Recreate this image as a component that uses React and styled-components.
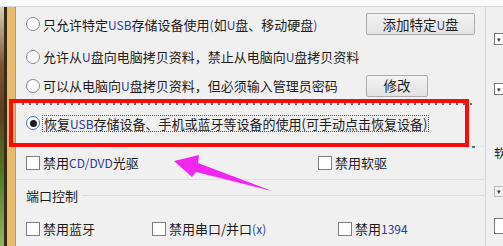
import styled, { createGlobalStyle } from "styled-components";

const GlobalStyle = createGlobalStyle`
  html, body {
    margin: 0;
    padding: 0;
  }
  body {
    width: 503px;
    height: 246px;
    overflow: hidden;
    background: #f0f0f0;
    font-family: "Noto Sans CJK SC", "Microsoft YaHei", sans-serif;
    color: #1c1c1c;
  }
`;

const Screen = styled.div`
  position: relative;
  width: 503px;
  height: 246px;
  overflow: hidden;
  display: flex;
  flex-direction: column;
`;

const TopBar = styled.div`
  height: 6px;
  background: #fbfbfb;
  border-bottom: 1px solid #dadada;
`;

const Body = styled.div`
  flex: 1;
  display: flex;
  min-height: 0;
`;

const Desktop = styled.div`
  width: 4px;
  background: linear-gradient(180deg, #d8cdbb 0%, #7a5230 25%, #5b4020 45%, #4f7a2c 70%, #8fb56a 100%);
`;

const FrameEdge = styled.div`
  width: 3px;
  background: #3b2a16;
`;

const FrameTan = styled.div`
  width: 8px;
  background: #e6bb69;
  border-right: 1px solid #a89b86;
`;

const Panel = styled.div`
  flex: 1;
  display: flex;
  flex-direction: column;
  background: #f0f0f0;
`;

const OptionRow = styled.div`
  height: ${(p) => p.$h}px;
  display: grid;
  grid-template-columns: 340px auto;
  align-items: center;
  padding-left: 10px;
`;

const Choice = styled.label`
  display: flex;
  align-items: center;
  gap: 3px;
  font-size: 13px;
  line-height: 1;
  white-space: nowrap;
`;

const Radio = styled.span`
  width: 14px;
  height: 14px;
  box-sizing: border-box;
  border-radius: 50%;
  border: 1px solid ${(p) => (p.$on ? "#3d7cb4" : "#8a8a8a")};
  background: radial-gradient(circle, #ffffff 55%, #ececec 100%);
  display: flex;
  align-items: center;
  justify-content: center;
  flex-shrink: 0;
  &::after {
    content: "";
    width: 7px;
    height: 7px;
    border-radius: 50%;
    background: ${(p) => (p.$on ? "#1a1a1a" : "transparent")};
  }
`;

const Box = styled.span`
  width: 14px;
  height: 14px;
  box-sizing: border-box;
  border: 1px solid #7f7f7f;
  background: #ffffff;
  flex-shrink: 0;
`;

const Latin = styled.span`
  color: #2a3a98;
  font-size: 12px;
`;

const FocusText = styled.span`
  padding: 1px 1px;
  outline: 1px dotted #555;
  outline-offset: 0;
`;

const Button = styled.button`
  width: ${(p) => p.$w}px;
  height: 22px;
  padding: 0;
  border: 1px solid #acacac;
  border-radius: 2px;
  background: linear-gradient(180deg, #f3f3f3 0%, #e3e3e3 100%);
  font-family: inherit;
  font-size: 13.5px;
  line-height: 1;
  color: #1c1c1c;
`;

const FocusGroup = styled.div`
  height: 47px;
  display: flex;
  flex-direction: column;
  padding-top: 3px;
  box-sizing: border-box;
`;

const Dots = styled.div`
  height: 2px;
  margin-left: 6px;
  width: 453px;
  background-image: repeating-linear-gradient(90deg, #6a6a6a 0 2px, transparent 2px 7px);
`;

const Rule = styled.div`
  height: 1px;
  background: ${(p) => p.$c || "#dedede"};
`;

const CheckRow = styled.div`
  height: ${(p) => p.$h}px;
  display: grid;
  grid-template-columns: ${(p) => p.$cols};
  align-items: center;
  padding-left: 10px;
`;

const GroupTitle = styled.div`
  height: 32px;
  display: flex;
  align-items: center;
  gap: 4px;
  padding-left: 10px;
  font-size: 13px;
  line-height: 1;
  &::after {
    content: "";
    flex: 1;
    height: 1px;
    background: #dcdcdc;
  }
`;

const SidePanel = styled.div`
  width: 18px;
  border-left: 1px solid #d6d6d6;
  padding-left: 8px;
  box-sizing: border-box;
  overflow: hidden;
  display: flex;
  flex-direction: column;
  font-size: 12px;
  line-height: 1;
`;

const SideBox = styled.div`
  flex-shrink: 0;
  margin-top: ${(p) => p.$top}px;
  width: 16px;
  height: ${(p) => p.$h}px;
  box-sizing: border-box;
  border: 1px solid ${(p) => (p.$dim ? "#b8b8b8" : "#7a7a7a")};
  background: ${(p) => (p.$dim ? "#f2f2f2" : "#ffffff")};
  display: flex;
  align-items: center;
  padding-left: 2px;
  font-size: 7px;
  color: #333;
`;

const SideText = styled.div`
  margin-top: ${(p) => p.$top}px;
  width: 10px;
  overflow: hidden;
  white-space: nowrap;
  height: 12px;
`;

const RedMark = styled.div`
  position: absolute;
  left: 9px;
  top: 99px;
  width: 460px;
  height: 48px;
  box-sizing: border-box;
  border: 4px solid #ff0a0a;
  pointer-events: none;
`;

const Dash = styled.div`
  position: absolute;
  left: 472px;
  top: 146px;
  width: 3px;
  height: 2px;
  background: #6a6a6a;
`;

const ArrowLayer = styled.svg`
  position: absolute;
  left: 0;
  top: 0;
  pointer-events: none;
`;

export default function App() {
  return (
    <Screen>
      <GlobalStyle />
      <TopBar />
      <Body>
        <Desktop />
        <FrameEdge />
        <FrameTan />
        <Panel>
          <OptionRow $h={36}>
            <Choice>
              <Radio />
              <span>
                只允许特定<Latin>USB</Latin>存储设备使用<Latin>(</Latin>如<Latin>U</Latin>盘、移动硬盘<Latin>)</Latin>
              </span>
            </Choice>
            <Button $w={109}>
              添加特定<Latin>U</Latin>盘
            </Button>
          </OptionRow>
          <OptionRow $h={30}>
            <Choice>
              <Radio />
              <span>
                允许从<Latin>U</Latin>盘向电脑拷贝资料，禁止从电脑向<Latin>U</Latin>盘拷贝资料
              </span>
            </Choice>
          </OptionRow>
          <OptionRow $h={30}>
            <Choice>
              <Radio />
              <span>
                可以从电脑向<Latin>U</Latin>盘拷贝资料，但必须输入管理员密码
              </span>
            </Choice>
            <Button $w={62}>修改</Button>
          </OptionRow>
          <FocusGroup>
            <Dots />
            <OptionRow $h={36}>
              <Choice>
                <Radio $on />
                <FocusText>
                  恢复<Latin>USB</Latin>存储设备、手机或蓝牙等设备的使用(可手动点击恢复设备)
                </FocusText>
              </Choice>
            </OptionRow>
          </FocusGroup>
          <Rule $c="#e6e6e6" />
          <CheckRow $h={33} $cols="292px auto">
            <Choice>
              <Box />
              <span>
                禁用<Latin>CD/DVD</Latin>光驱
              </span>
            </Choice>
            <Choice>
              <Box />
              <span>禁用软驱</span>
            </Choice>
          </CheckRow>
          <Rule />
          <GroupTitle>端口控制</GroupTitle>
          <CheckRow $h={36} $cols="126px 186px auto">
            <Choice>
              <Box />
              <span>禁用蓝牙</span>
            </Choice>
            <Choice>
              <Box />
              <span>
                禁用串口/并口<Latin>(x)</Latin>
              </span>
            </Choice>
            <Choice>
              <Box />
              <span>
                禁用<Latin>1394</Latin>
              </span>
            </Choice>
          </CheckRow>
        </Panel>
        <SidePanel>
          <SideBox $top={26} $h={12}>▾</SideBox>
          <SideBox $top={38} $h={12}>▾</SideBox>
          <SideText $top={52}>软</SideText>
          <SideBox $top={27} $h={11} $dim>▾</SideBox>
          <SideBox $top={21} $h={16} />
        </SidePanel>
      </Body>
      <RedMark />
      <Dash />
      <ArrowLayer width="503" height="246" viewBox="0 0 503 246">
        <polygon
          points="174,161 199,155 198,163 272,191 196,172 192,177"
          fill="#f126ef"
        />
      </ArrowLayer>
    </Screen>
  );
}
